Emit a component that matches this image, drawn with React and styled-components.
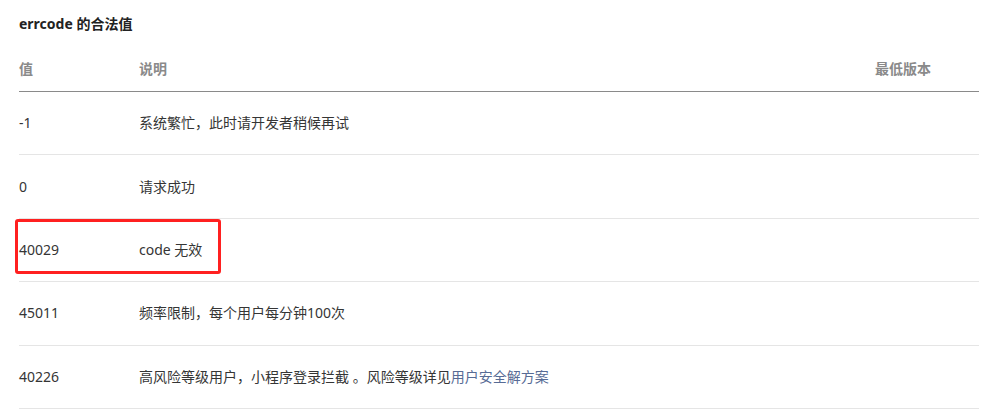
import React from 'react';
import styled, { createGlobalStyle } from 'styled-components';

const GlobalStyle = createGlobalStyle`
  body {
    margin: 0;
    background: #fff;
    font-family: "Segoe UI", "Noto Sans", "Noto Sans CJK SC", sans-serif;
    color: #353535;
  }
`;

const Page = styled.div`
  padding: 14px 3px 0 19px;
`;

const Title = styled.h4`
  margin: 0;
  font-size: 14px;
  line-height: 20px;
  font-weight: bold;
  color: #222;
`;

const Table = styled.table`
  width: 100%;
  margin-top: 13px;
  border-collapse: collapse;
  font-size: 14px;
`;

const HeadCell = styled.th`
  text-align: left;
  font-weight: bold;
  color: #8a8a8a;
  line-height: 20px;
  padding: 12px 0;
  border-bottom: 1px solid #8a8a8a;
  width: ${(p) => p.$width || 'auto'};
`;

const Row = styled.tr`
  border-bottom: 1px solid #e5e5e5;
`;

const Cell = styled.td`
  position: relative;
  line-height: 20px;
  padding: 21.2px 0;
  color: #353535;
`;

const Highlight = styled.span`
  position: absolute;
  left: -4px;
  top: 0;
  width: 206px;
  height: 55px;
  box-sizing: border-box;
  border: 3px solid #ff2020;
  border-radius: 3px;
`;

const Link = styled.a`
  color: #576b95;
  text-decoration: none;
`;

const rows = [
  { code: '-1', desc: '系统繁忙，此时请开发者稍候再试' },
  { code: '0', desc: '请求成功' },
  { code: '40029', desc: 'code 无效', marked: true },
  { code: '45011', desc: '频率限制，每个用户每分钟100次' },
  {
    code: '40226',
    desc: (
      <>
        高风险等级用户，小程序登录拦截 。风险等级详见<Link href="#">用户安全解方案</Link>
      </>
    ),
  },
];

export default function App() {
  return (
    <Page>
      <GlobalStyle />
      <Title>errcode 的合法值</Title>
      <Table>
        <thead>
          <tr>
            <HeadCell $width="120px">值</HeadCell>
            <HeadCell>说明</HeadCell>
            <HeadCell $width="104px">最低版本</HeadCell>
          </tr>
        </thead>
        <tbody>
          {rows.map((r) => (
            <Row key={r.code}>
              <Cell>
                {r.marked && <Highlight />}
                {r.code}
              </Cell>
              <Cell>{r.desc}</Cell>
              <Cell />
            </Row>
          ))}
        </tbody>
      </Table>
    </Page>
  );
}
